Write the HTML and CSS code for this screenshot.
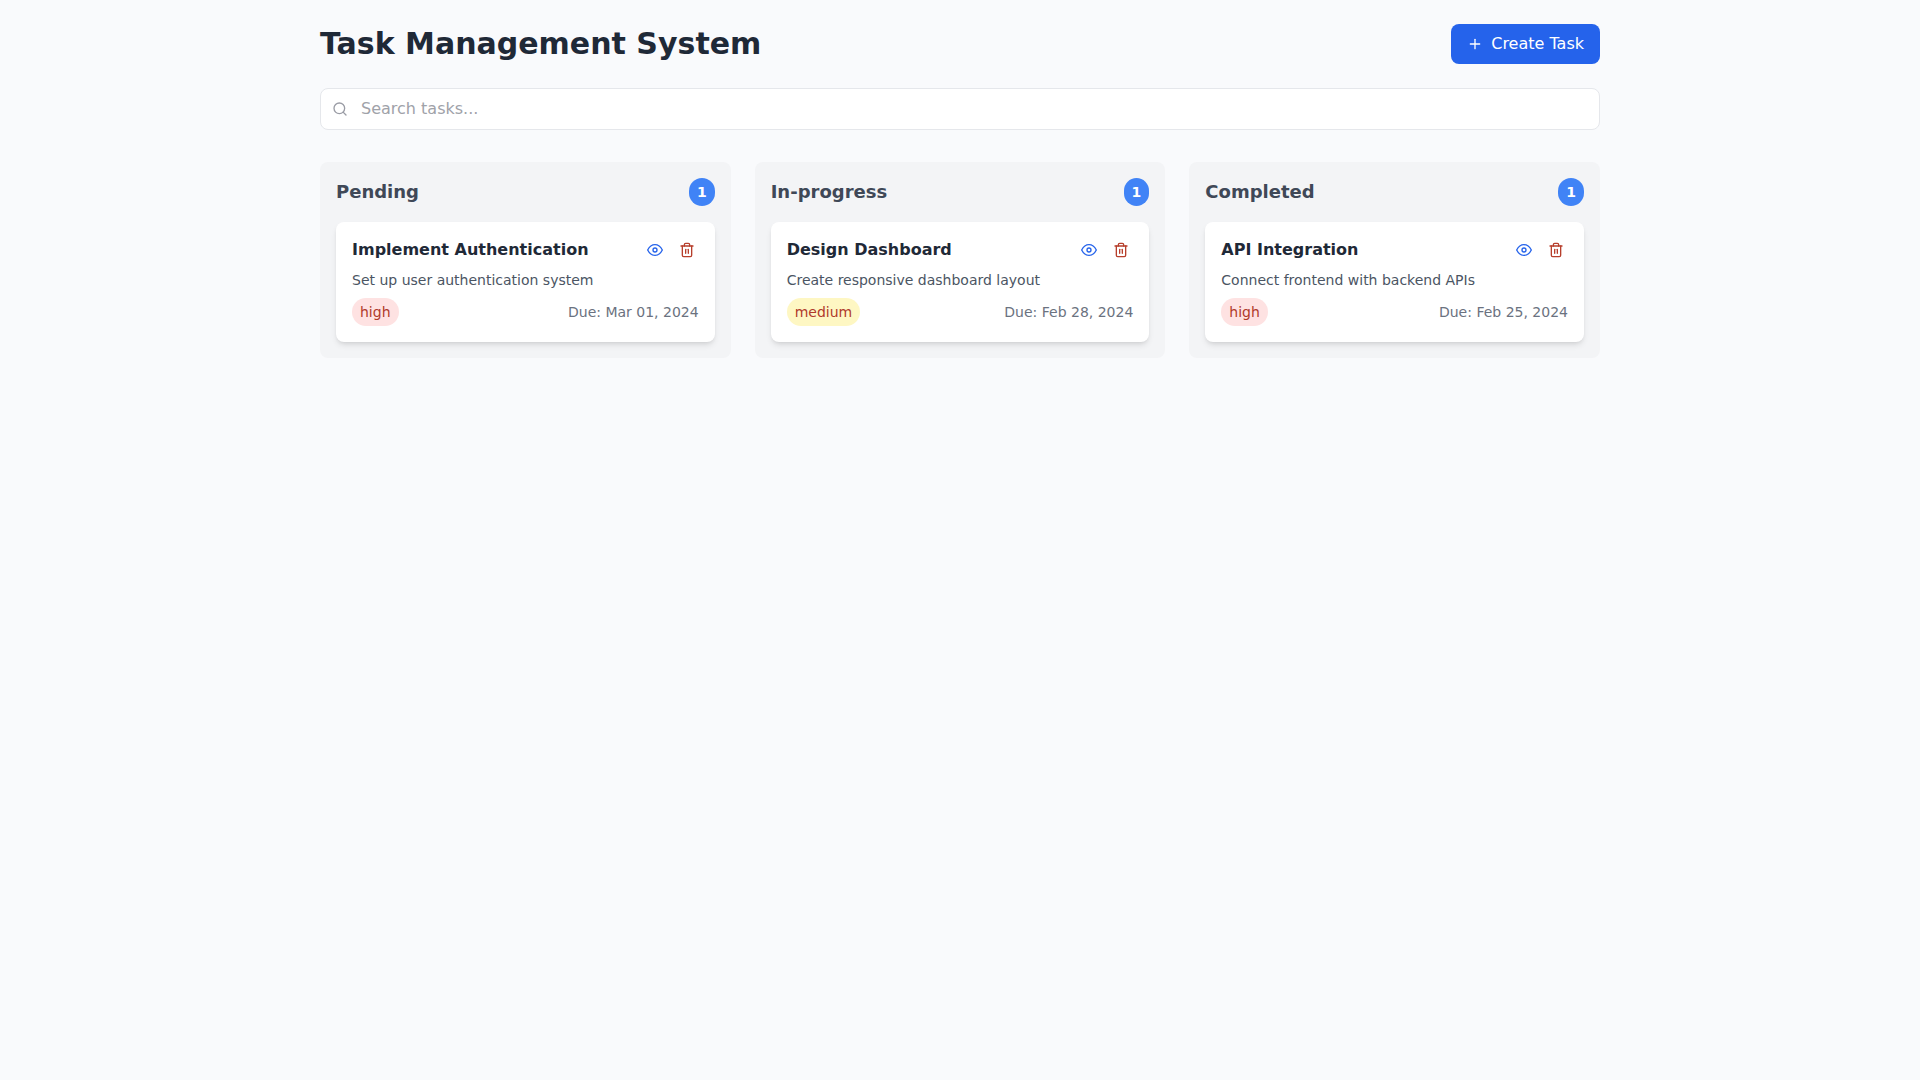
FILE: index.html
```html
<!DOCTYPE html>
<html lang="en">
<head>
  <meta charset="UTF-8" />
  <meta name="viewport" content="width=device-width, initial-scale=1.0" />
  <title>Task Management System</title>
  <link rel="stylesheet" href="styles.css">
</head>
<body>
  <!-- icon set -->
  <svg class="sprite" aria-hidden="true">
    <symbol id="i-plus" viewBox="0 0 24 24"><line x1="12" y1="5" x2="12" y2="19"/><line x1="5" y1="12" x2="19" y2="12"/></symbol>
    <symbol id="i-search" viewBox="0 0 24 24"><circle cx="11" cy="11" r="8"/><line x1="21" y1="21" x2="16.65" y2="16.65"/></symbol>
    <symbol id="i-eye" viewBox="0 0 24 24"><path d="M1 12s4-8 11-8 11 8 11 8-4 8-11 8-11-8-11-8z"/><circle cx="12" cy="12" r="3"/></symbol>
    <symbol id="i-trash" viewBox="0 0 24 24"><polyline points="3 6 5 6 21 6"/><path d="M19 6v14a2 2 0 0 1-2 2H7a2 2 0 0 1-2-2V6m3 0V4a2 2 0 0 1 2-2h4a2 2 0 0 1 2 2v2"/><line x1="10" y1="11" x2="10" y2="17"/><line x1="14" y1="11" x2="14" y2="17"/></symbol>
  </svg>

  <div class="container">
    <header class="header">
      <h1>Task Management System</h1>
      <button type="button" class="create-btn">
        <svg class="icon"><use href="#i-plus"/></svg>
        Create Task
      </button>
    </header>

    <div class="search">
      <svg class="icon search-icon"><use href="#i-search"/></svg>
      <input type="text" id="search" placeholder="Search tasks..." aria-label="Search tasks">
    </div>

    <main class="board">
      <section class="column">
        <div class="column-head">
          <h2>Pending</h2>
          <span class="count">1</span>
        </div>
        <article class="card">
          <div class="card-head">
            <h3>Implement Authentication</h3>
            <div class="actions">
              <button type="button" class="view" aria-label="View task"><svg class="icon"><use href="#i-eye"/></svg></button>
              <button type="button" class="delete" aria-label="Delete task"><svg class="icon"><use href="#i-trash"/></svg></button>
            </div>
          </div>
          <p class="desc">Set up user authentication system</p>
          <div class="meta">
            <span class="priority high">high</span>
            <span class="due">Due: Mar 01, 2024</span>
          </div>
        </article>
      </section>

      <section class="column">
        <div class="column-head">
          <h2>In-progress</h2>
          <span class="count">1</span>
        </div>
        <article class="card">
          <div class="card-head">
            <h3>Design Dashboard</h3>
            <div class="actions">
              <button type="button" class="view" aria-label="View task"><svg class="icon"><use href="#i-eye"/></svg></button>
              <button type="button" class="delete" aria-label="Delete task"><svg class="icon"><use href="#i-trash"/></svg></button>
            </div>
          </div>
          <p class="desc">Create responsive dashboard layout</p>
          <div class="meta">
            <span class="priority medium">medium</span>
            <span class="due">Due: Feb 28, 2024</span>
          </div>
        </article>
      </section>

      <section class="column">
        <div class="column-head">
          <h2>Completed</h2>
          <span class="count">1</span>
        </div>
        <article class="card">
          <div class="card-head">
            <h3>API Integration</h3>
            <div class="actions">
              <button type="button" class="view" aria-label="View task"><svg class="icon"><use href="#i-eye"/></svg></button>
              <button type="button" class="delete" aria-label="Delete task"><svg class="icon"><use href="#i-trash"/></svg></button>
            </div>
          </div>
          <p class="desc">Connect frontend with backend APIs</p>
          <div class="meta">
            <span class="priority high">high</span>
            <span class="due">Due: Feb 25, 2024</span>
          </div>
        </article>
      </section>
    </main>
  </div>
</body>
</html>
```
FILE: styles.css
```css
* {
  box-sizing: border-box;
  margin: 0;
}
body {
  min-height: 100vh;
  padding: 24px;
  background: #f9fafc;
  color: #1f2937;
  font-family: "DejaVu Sans", sans-serif;
  font-size: 16px;
  line-height: 24px;
}
button, input {
  font: inherit;
}
button {
  border: none;
  cursor: pointer;
}
.sprite {
  display: none;
}
.icon {
  display: block;
  width: 16px;
  height: 16px;
  fill: none;
  stroke: currentColor;
  stroke-width: 2;
  stroke-linecap: round;
  stroke-linejoin: round;
}
.container {
  max-width: 1280px;
  margin: 0 auto;
}

.header {
  display: flex;
  justify-content: space-between;
  align-items: center;
  margin-bottom: 24px;
}
h1 {
  font-size: 30px;
  line-height: 36px;
}
.create-btn {
  display: flex;
  align-items: center;
  gap: 8px;
  padding: 8px 16px;
  border-radius: 8px;
  background: #2563eb;
  color: #fff;
}

.search {
  position: relative;
  margin-bottom: 32px;
}
.search-icon {
  position: absolute;
  left: 12px;
  top: 13px;
  color: #9a9ca5;
}
.search input {
  display: block;
  width: 100%;
  padding: 8px 16px 8px 40px;
  border: 1px solid #e5e7eb;
  border-radius: 8px;
  background: #fff;
  color: inherit;
}
.search input::placeholder {
  color: #a0a2a9;
}

.board {
  display: grid;
  grid-template-columns: repeat(3, 1fr);
  gap: 24px;
}
.column {
  padding: 16px;
  border-radius: 8px;
  background: #f3f4f6;
}
.column-head {
  display: flex;
  justify-content: space-between;
  align-items: center;
  margin-bottom: 16px;
}
h2 {
  font-size: 18px;
  line-height: 28px;
  color: #3f4857;
}
.count {
  padding: 4px 8px;
  border-radius: 14px;
  background: #4083f6;
  color: #fff;
  font-size: 14px;
  font-weight: 700;
  line-height: 20px;
}

.card {
  display: flex;
  flex-direction: column;
  gap: 8px;
  padding: 16px;
  border-radius: 8px;
  background: #fff;
  box-shadow: 0 4px 6px -1px rgba(0, 0, 0, 0.1), 0 2px 4px -2px rgba(0, 0, 0, 0.1);
}
.card-head, .meta {
  display: flex;
  justify-content: space-between;
  align-items: center;
}
h3 {
  font-size: 16px;
}
.actions {
  display: flex;
  gap: 8px;
}
.actions button {
  padding: 4px;
  background: none;
}
.view { color: #2563eb; }
.delete { color: #b73f2c; }
.desc, .meta {
  font-size: 14px;
  line-height: 20px;
}
.desc {
  color: #4b5563;
}
.priority {
  padding: 4px 8px;
  border-radius: 14px;
  color: #b03a2b;
}
.high { background: #fee2e2; }
.medium { background: #fef7c3; }
.due {
  color: #6b7280;
}

@media (max-width: 768px) {
  .board { grid-template-columns: 1fr; }
}
```
